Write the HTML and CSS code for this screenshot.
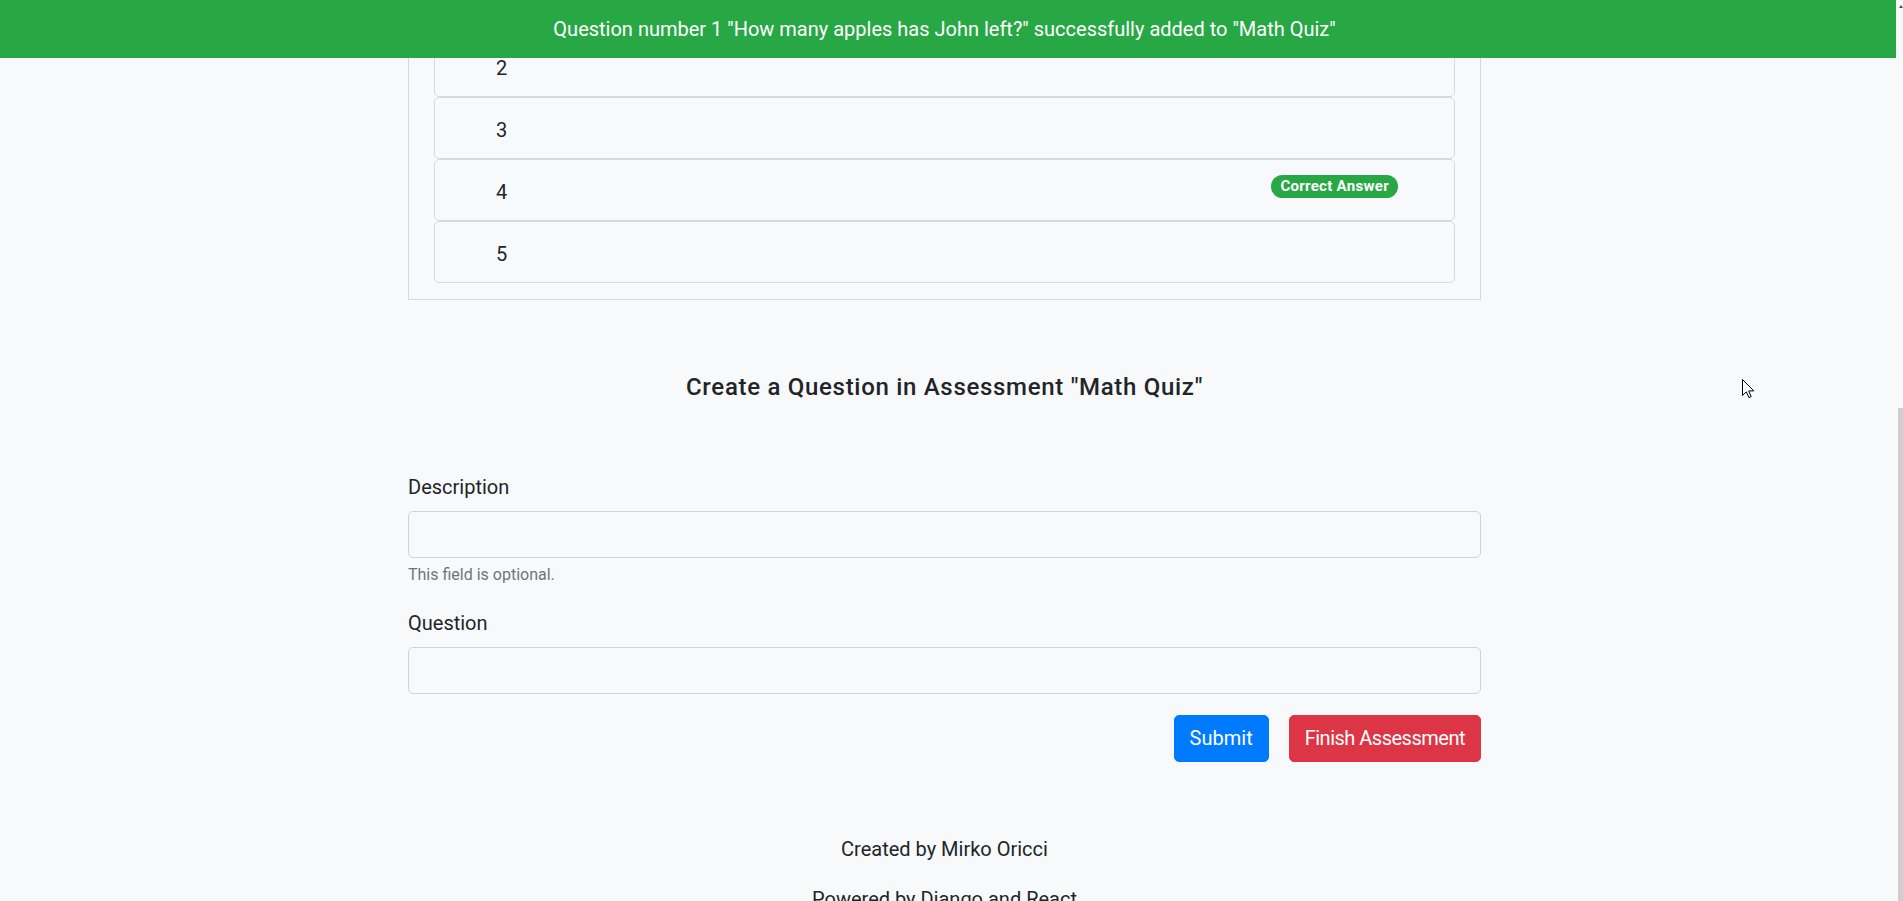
FILE: index.html
```html
<!DOCTYPE html>
<html lang="en">
<head>
<meta charset="utf-8">
<title>Create a Question</title>
<link rel="stylesheet" href="styles.css">
</head>
<body>
<div class="toast">Question number 1 "How many apples has John left?" successfully added to "Math Quiz"</div>

<main class="page">
  <section class="question-card">
    <ul class="answers">
      <li class="answer"><span class="num">2</span></li>
      <li class="answer"><span class="num">3</span></li>
      <li class="answer"><span class="num">4</span><span class="badge">Correct Answer</span></li>
      <li class="answer"><span class="num">5</span></li>
    </ul>
  </section>

  <h4 class="form-title">Create a Question in Assessment "Math Quiz"</h4>

  <form class="question-form">
    <div class="group">
      <label class="label" for="description">Description</label>
      <input class="field" id="description" type="text">
      <small class="help">This field is optional.</small>
    </div>
    <div class="group">
      <label class="label" for="question">Question</label>
      <input class="field" id="question" type="text">
    </div>
    <div class="actions">
      <button type="button" class="btn btn-primary">Submit</button>
      <button type="button" class="btn btn-danger">Finish Assessment</button>
    </div>
  </form>

  <footer class="footer">
    <p>Created by Mirko Oricci</p>
    <p>Powered by Django and React</p>
  </footer>
</main>

<div class="scroll-arrow"></div>
<div class="scroll-thumb"></div>
<svg class="cursor" width="13" height="20" viewBox="0 0 13 20" xmlns="http://www.w3.org/2000/svg">
  <path d="M0.5 0.5 L0.5 16.5 L4.3 12.8 L6.9 18.6 L9.2 17.6 L6.7 11.9 L11.8 11.9 Z" fill="#ffffff" stroke="#000000" stroke-width="1" stroke-linejoin="miter"/>
</svg>
</body>
</html>
```

FILE: styles.css
```css
html {
  scrollbar-width: none;
}
::-webkit-scrollbar {
  display: none;
}
* {
  box-sizing: border-box;
}
body {
  margin: 0;
  padding-top: 9px;
  background: #f8f9fa;
  color: #212529;
  font-family: Roboto, "Liberation Sans", sans-serif;
  font-size: 20px;
  line-height: 30px;
}

.toast {
  position: fixed;
  top: 0;
  left: 0;
  width: 1896px;
  height: 58px;
  padding: 14px 7px 14px 0;
  background: #28a745;
  color: #ffffff;
  text-align: center;
  font-size: 20px;
  line-height: 30px;
  z-index: 10;
}

.page {
  width: 1073px;
  margin-left: 408px;
}

.question-card {
  border: 1px solid rgba(0, 0, 0, 0.125);
  padding: 25px 25px 16px;
}

.answers {
  list-style: none;
  margin: 0;
  padding: 0;
}

.answer {
  display: flex;
  justify-content: space-between;
  align-items: flex-start;
  height: 62px;
  padding: 15px 56px 15px 61px;
  border: 1px solid rgba(0, 0, 0, 0.125);
  border-radius: 5px;
}

.num {
  padding-top: 2px;
  font-size: 20px;
  line-height: 30px;
}

.badge {
  display: inline-block;
  background: #28a745;
  color: #ffffff;
  font-size: 15px;
  font-weight: 700;
  line-height: 15px;
  letter-spacing: 0.3px;
  padding: 3.75px 9px;
  border-radius: 12px;
  white-space: nowrap;
}

.form-title {
  margin: 73px 0 0;
  text-align: center;
  font-size: 24px;
  font-weight: 500;
  line-height: 28.8px;
  letter-spacing: 0.7px;
}

.question-form {
  margin-top: 70px;
}

.group {
  margin-bottom: 21px;
}

.label {
  display: block;
  margin-bottom: 9px;
  font-size: 20px;
  line-height: 30px;
}

.field {
  display: block;
  width: 100%;
  height: 47px;
  padding: 7.5px 15px;
  border: 1px solid #ced4da;
  border-radius: 5px;
  background: #f8f9fa;
  font: inherit;
  color: #495057;
}

.help {
  display: block;
  margin-top: 5px;
  font-size: 16px;
  line-height: 24px;
  color: #6c757d;
}

.actions {
  display: flex;
  justify-content: flex-end;
  gap: 20px;
}

.btn {
  height: 47px;
  padding: 7.5px 15px;
  border: 1px solid transparent;
  border-radius: 5px;
  color: #ffffff;
  font-family: inherit;
  font-size: 20px;
  line-height: 30px;
}

.btn-primary {
  background: #007bff;
  border-color: #007bff;
}

.btn-danger {
  background: #dc3545;
  border-color: #dc3545;
  letter-spacing: -0.5px;
}

.footer {
  margin-top: 72px;
  text-align: center;
}

.footer p {
  margin: 0 0 20px;
}

.scroll-arrow {
  position: fixed;
  top: 5px;
  left: 1899px;
  width: 0;
  height: 0;
  border-left: 2.5px solid transparent;
  border-right: 2.5px solid transparent;
  border-bottom: 3px solid #505050;
}

.scroll-thumb {
  position: fixed;
  top: 408px;
  left: 1898px;
  width: 5px;
  bottom: 0;
  background: #cfcfcf;
}

.cursor {
  position: fixed;
  left: 1742px;
  top: 379px;
  z-index: 20;
}
```
